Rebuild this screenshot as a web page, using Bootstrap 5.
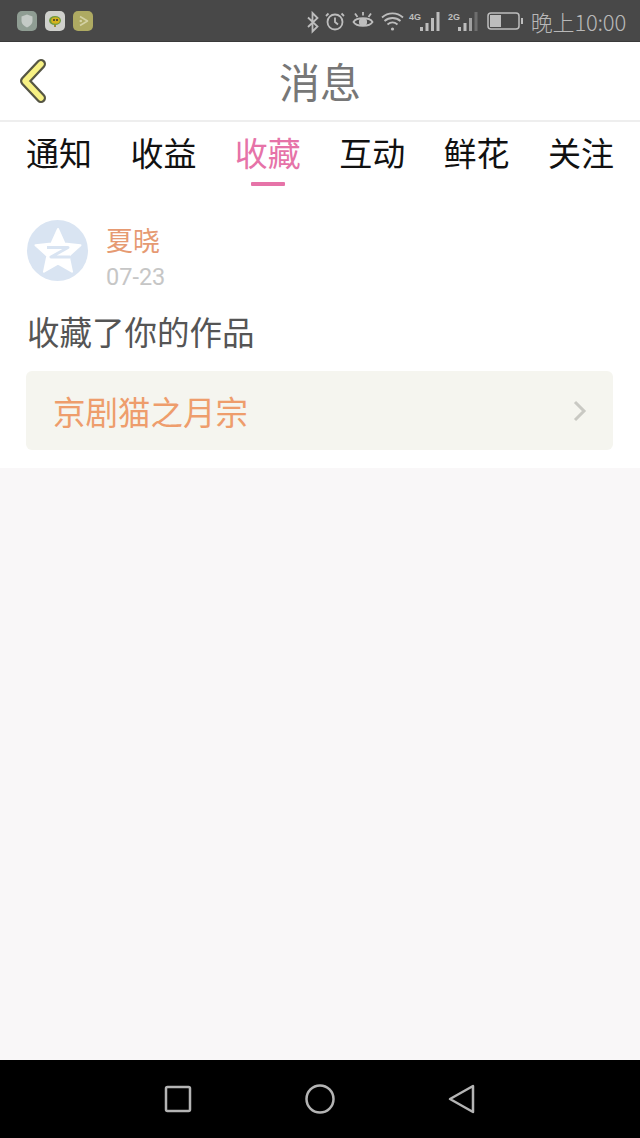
<!DOCTYPE html>
<html lang="zh"><head><meta charset="utf-8"><title>消息</title>
<link rel="stylesheet" href="https://cdn.jsdelivr.net/npm/bootstrap@5.3.0/dist/css/bootstrap.min.css">
<style>
html,body{height:100%}
body{font-family:"Noto Sans CJK SC","Noto Sans",sans-serif;background:#f9f7f8;overflow:hidden}
.app{height:1138px}
.sbar{height:42px;background:#484848;padding:0 14px 0 17px;border-bottom:1px solid #3a3a3a;color:#bdbdbd}
.sbar svg{display:block}
.sigtxt{font-family:"Liberation Sans",sans-serif;font-size:9px;font-weight:700;fill:#bdbdbd;stroke:none}
.stime{font-family:"Noto Sans CJK SC",sans-serif;font-size:22px;line-height:42px;letter-spacing:-.2px;margin-left:7px;color:#b8b8b8;font-weight:300}
.topbar{height:78px;background:#fff;padding-left:17px}
.backic{width:32px;height:46px}
.ttl{font-size:41px;line-height:76px;color:#777;font-weight:400;left:0;right:0;top:0}
.tabrow{background:#fff;border-top:2px solid #eeeeee;padding:0 26px;height:70px}
.tabitem{font-size:33px;line-height:60px;color:#111;width:66px;white-space:nowrap;font-weight:400;position:relative}
.tabitem.on{color:#e673a8}
.tabitem.on::after{content:"";position:absolute;left:16px;width:34px;height:4px;top:60px;background:#e673a8;border-radius:1px}
.msgbody{background:#fff;padding:30px 27px 18px 26px}
.avatar{width:61px;height:61px;border-radius:50%;background:#d9e4f2;margin-left:1px}
.uname{font-size:27px;line-height:36px;color:#e69a72;font-weight:400}
.udate{font-family:"Roboto",sans-serif;font-size:23.500px;line-height:34px;color:#c6c6c6;font-weight:400;margin-top:2px}
.uinfo{margin-left:18px;margin-top:2px}
.act{font-size:32.500px;line-height:46px;color:#555;font-weight:400;margin-top:14px;margin-left:1px}
.wcard{height:79px;background:#f5f5ef;border-radius:6px;margin-top:17px;padding:0 26px 0 27px}
.wname{font-size:32.500px;color:#ee9d6c;font-weight:400;line-height:79px}
.filler{background:#f9f7f8}
.navb{height:78px;background:#000}
.navspot{width:142px}
</style></head>
<body>
<div class="app d-flex flex-column">
  <div class="sbar d-flex align-items-center justify-content-between">
    <div class="d-flex gap-2 align-items-center">
      <svg width="20" height="20" viewBox="0 0 20 20"><rect width="20" height="20" rx="5" fill="#8f9d93"/><path d="M10 3.500l5.500 2v4.500c0 3-2.400 5-5.500 6.500-3.100-1.500-5.500-3.500-5.500-6.500V5.500z" fill="#c4cac6"/></svg>
      <svg width="20" height="20" viewBox="0 0 20 20"><rect width="20" height="20" rx="5" fill="#cfd0cc"/><ellipse cx="10" cy="9.500" rx="6" ry="4.500" fill="#6f9a3c"/><ellipse cx="10.500" cy="9.500" rx="4.300" ry="3.200" fill="#d6b21e"/><circle cx="9" cy="9" r="1" fill="#333"/><circle cx="12" cy="9" r="1" fill="#333"/><rect x="9" y="14" width="2" height="2" fill="#9a8a3a"/></svg>
      <svg width="20" height="20" viewBox="0 0 20 20"><rect width="20" height="20" rx="5" fill="#aeaa62"/><path d="M7 5.500l7.500 4.500L7 14.500" fill="none" stroke="#d4d2a4" stroke-width="1.500" stroke-linejoin="round"/><circle cx="7.800" cy="10" r="1.300" fill="#d4d2a4"/></svg>
    </div>
    <div class="d-flex align-items-center">
      <svg width="178" height="26" viewBox="0 0 178 26" fill="none" stroke="#bdbdbd" stroke-width="1.800">
        <path d="M3 9.500l9.500 9-5 5V5l5 5L3 19"/>
        <circle cx="30" cy="14" r="7.500"/><path d="M30 9.500V14l3 2.500M23.500 5.500L21 8M36.500 5.500L39 8"/>
        <path d="M48.500 14c3-5 16-5 19 0-3 5-16 5-19 0z"/><circle cx="58" cy="14" r="3.200" fill="#bdbdbd"/><path d="M50 5.500L52.500 9M58 4v3.500M66 5.500L63.500 9"/>
        <path d="M77 9.500c6-5.500 15-5.500 21 0M79.500 13c4.500-4 11.500-4 16 0M82.500 16.500c3-2.500 7-2.500 10 0"/><circle cx="87.500" cy="21" r="1.600" fill="#bdbdbd" stroke="none"/>
        <text class="sigtxt" x="104" y="12">4G</text>
        <text class="sigtxt" x="143" y="12">2G</text>
        <g stroke="none" fill="#bdbdbd"><rect x="115" y="19" width="3" height="4"/><rect x="120.500" y="15" width="3" height="8"/><rect x="126" y="10" width="3" height="13"/><rect x="131.500" y="4" width="3" height="19"/>
        <rect x="153" y="19" width="3" height="4"/><rect x="158.500" y="15" width="3" height="8"/><rect x="164" y="10" width="3" height="13" fill="#a0a0a0"/><rect x="169.500" y="4" width="3" height="19" fill="#6e6e6e"/></g>
      </svg>
      <svg width="37" height="20" viewBox="0 0 37 20" class="ms-1"><rect x="1" y="2" width="31" height="16" rx="3" fill="none" stroke="#bdbdbd" stroke-width="1.500"/><rect x="3" y="4" width="11" height="12" fill="#bdbdbd"/><rect x="34" y="7" width="2" height="6" fill="#bdbdbd"/></svg>
      <span class="stime">晚上10:00</span>
    </div>
  </div>
  <div class="topbar position-relative d-flex align-items-center">
    <svg class="backic" viewBox="0 0 32 46"><path d="M24 6L8 23l16 17" fill="none" stroke="#565644" stroke-width="10" stroke-linecap="round" stroke-linejoin="round"/><path d="M24 6L8 23l16 17" fill="none" stroke="#f7f184" stroke-width="5.500" stroke-linecap="round" stroke-linejoin="round"/></svg>
    <div class="ttl position-absolute text-center">消息</div>
  </div>
  <div class="tabrow d-flex justify-content-between">
    <div class="tabitem">通知</div><div class="tabitem">收益</div><div class="tabitem on">收藏</div><div class="tabitem">互动</div><div class="tabitem">鲜花</div><div class="tabitem">关注</div>
  </div>
  <div class="msgbody">
    <div class="d-flex">
      <div class="avatar d-flex align-items-center justify-content-center">
        <svg width="50" height="50" viewBox="0 0 50 50"><path d="M25 3l6.500 14.500 16 1.700-11.800 10.700 3.300 15.800L25 37.700l-14 8 3.300-15.800L2.500 19.200l16-1.700z" fill="#fff" stroke="#fff" stroke-width="2" stroke-linejoin="round"/><path d="M14 21.500h21L18 31h19" fill="none" stroke="#d9e4f2" stroke-width="3" stroke-linejoin="round"/></svg>
      </div>
      <div class="uinfo"><div class="uname">夏晓</div><div class="udate">07-23</div></div>
    </div>
    <div class="act">收藏了你的作品</div>
    <div class="wcard d-flex align-items-center justify-content-between">
      <span class="wname">京剧猫之月宗</span>
      <svg width="14" height="22" viewBox="0 0 14 22"><path d="M2 2l9 9-9 9" fill="none" stroke="#c9c9c3" stroke-width="3"/></svg>
    </div>
  </div>
  <div class="filler flex-grow-1"></div>
  <div class="navb d-flex align-items-center justify-content-center">
    <div class="navspot d-flex justify-content-center"><svg width="28" height="28" viewBox="0 0 28 28"><rect x="2" y="2" width="24" height="24" rx="1.500" fill="none" stroke="#b4b4b4" stroke-width="2.500"/></svg></div>
    <div class="navspot d-flex justify-content-center"><svg width="30" height="30" viewBox="0 0 30 30"><circle cx="15" cy="15" r="13.500" fill="none" stroke="#b4b4b4" stroke-width="2.500"/></svg></div>
    <div class="navspot d-flex justify-content-center"><svg width="28" height="32" viewBox="0 0 28 32"><path d="M25 3v26L2 16z" fill="none" stroke="#b4b4b4" stroke-width="2.500" stroke-linejoin="round"/></svg></div>
  </div>
</div>
</body></html>
